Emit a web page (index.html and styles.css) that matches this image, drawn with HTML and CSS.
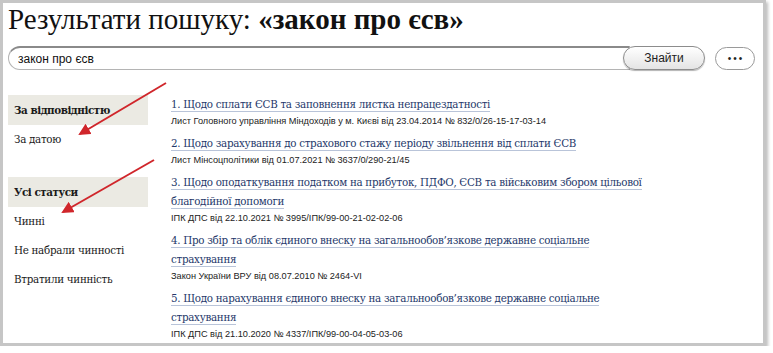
FILE: index.html
```html
<!DOCTYPE html>
<html lang="uk">
<head>
    <meta charset="UTF-8">
    <title>Результати пошуку</title>
    <link rel="stylesheet" href="styles.css">
</head>
<body>
    <div class="frame">
        <h1 class="title">Результати пошуку: <b>«закон про єсв»</b></h1>

        <form class="search">
            <input class="search-input" type="text" value="закон про єсв">
            <button class="search-btn" type="button">Знайти</button>
            <button class="more-btn" type="button">&bull;&bull;&bull;</button>
        </form>

        <div class="main">
            <div class="sidebar">
                <div class="side-head">За відповідністю</div>
                <div class="side-item">За датою</div>
                <div class="side-head side-gap">Усі статуси</div>
                <div class="side-item">Чинні</div>
                <div class="side-item">Не набрали чинності</div>
                <div class="side-item">Втратили чинність</div>
            </div>

            <ol class="results">
                <li class="result">
                    <div class="result-title"><a class="result-link" href="#">1. Щодо сплати ЄСВ та заповнення листка непрацездатності</a></div>
                    <div class="result-meta">Лист Головного управління Міндоходів у м. Києві від 23.04.2014 № 832/0/26-15-17-03-14</div>
                </li>
                <li class="result">
                    <div class="result-title"><a class="result-link" href="#">2. Щодо зарахування до страхового стажу періоду звільнення від сплати ЄСВ</a></div>
                    <div class="result-meta">Лист Мінсоцполітики від 01.07.2021 № 3637/0/290-21/45</div>
                </li>
                <li class="result">
                    <div class="result-title"><a class="result-link" href="#">3. Щодо оподаткування податком на прибуток, ПДФО, ЄСВ та військовим збором цільової благодійної допомоги</a></div>
                    <div class="result-meta">ІПК ДПС від 22.10.2021 № 3995/ІПК/99-00-21-02-02-06</div>
                </li>
                <li class="result">
                    <div class="result-title"><a class="result-link" href="#">4. Про збір та облік єдиного внеску на загальнообов’язкове державне соціальне страхування</a></div>
                    <div class="result-meta">Закон України ВРУ від 08.07.2010 № 2464-VI</div>
                </li>
                <li class="result">
                    <div class="result-title"><a class="result-link" href="#">5. Щодо нарахування єдиного внеску на загальнообов’язкове державне соціальне страхування</a></div>
                    <div class="result-meta">ІПК ДПС від 21.10.2020 № 4337/ІПК/99-00-04-05-03-06</div>
                </li>
            </ol>
        </div>

        <svg class="arrows" width="766" height="346" viewBox="0 0 766 346">
            <defs>
                <marker id="head" markerWidth="6" markerHeight="6" refX="5" refY="3" orient="auto">
                    <path d="M0,0 L6,3 L0,6 Z" fill="#d0262b"/>
                </marker>
            </defs>
            <line x1="166" y1="83" x2="80" y2="134" stroke="#d0262b" stroke-width="2" marker-end="url(#head)"/>
            <line x1="154" y1="160" x2="63" y2="212" stroke="#d0262b" stroke-width="2" marker-end="url(#head)"/>
        </svg>
    </div>
</body>
</html>
```

FILE: styles.css
```css
body {
    margin: 0;
    background: #fff;
    font-family: "Liberation Serif", serif;
}
.frame {
    position: relative;
    box-sizing: border-box;
    width: 766px;
    height: 346px;
    border: 3px solid #c6c6c6;
    box-shadow: 2px 2px 3px rgba(0, 0, 0, 0.25);
    padding: 0 5px;
    overflow: hidden;
}
.title {
    margin: 0;
    font-size: 29px;
    line-height: 32px;
    font-weight: normal;
    color: #111;
}
.title b { font-weight: bold; }

.search {
    display: flex;
    align-items: center;
    margin-top: 11px;
    height: 24px;
}
.search-input {
    box-sizing: border-box;
    width: 622px;
    height: 24px;
    border: 1px solid #b4b4b4;
    border-top: 2px solid #8a8a8a;
    border-radius: 12px 0 0 12px;
    padding: 0 9px;
    font-family: "Liberation Sans", Arial, sans-serif;
    font-size: 12px;
    color: #111;
    outline: none;
}
.search-btn {
    box-sizing: border-box;
    width: 82px;
    height: 24px;
    margin-left: -7px;
    border: 1px solid #8c8c8c;
    border-radius: 12px;
    background: linear-gradient(#ffffff, #e4e4e4);
    box-shadow: 0 1px 1px rgba(0, 0, 0, 0.3);
    font-family: "Liberation Sans", Arial, sans-serif;
    font-size: 12px;
    color: #222;
    padding: 0;
}
.more-btn {
    box-sizing: border-box;
    width: 40px;
    height: 23px;
    margin-left: 10px;
    border: 1px solid #9a9a9a;
    border-radius: 12px;
    background: #fff;
    font-size: 10px;
    letter-spacing: 2px;
    color: #222;
    padding: 0 0 0 2px;
}

.main {
    display: flex;
    align-items: flex-start;
    margin-top: 23px;
}
.sidebar {
    width: 140px;
    margin-top: 2px;
    flex-shrink: 0;
    font-family: "DejaVu Serif Condensed", "DejaVu Serif", serif;
}
.side-head {
    background: #ebeae3;
    height: 30px;
    line-height: 30px;
    padding-left: 6px;
    font-size: 11.5px;
    letter-spacing: -0.45px;
    font-weight: bold;
    color: #1a1a1a;
}
.side-gap { margin-top: 23px; }
.side-item {
    line-height: 29px;
    padding-left: 6px;
    font-size: 11.5px;
    letter-spacing: -0.3px;
    color: #1a1a1a;
}

.results {
    list-style: none;
    margin: 2px 0 0 23px;
    padding: 0;
    width: 480px;
}
.result { margin-bottom: 5px; }
.result-title {
    font-family: "DejaVu Serif Condensed", "DejaVu Serif", serif;
    font-size: 11.5px;
    letter-spacing: -0.3px;
    line-height: 19px;
}
.result-link {
    color: #26396b;
    text-decoration: none;
    border-bottom: 1px solid #b9c4d9;
}
.result-meta {
    font-family: "Liberation Sans", Arial, sans-serif;
    font-size: 9.2px;
    line-height: 15px;
    color: #222;
}

.arrows {
    position: absolute;
    left: -3px;
    top: -3px;
}
```
